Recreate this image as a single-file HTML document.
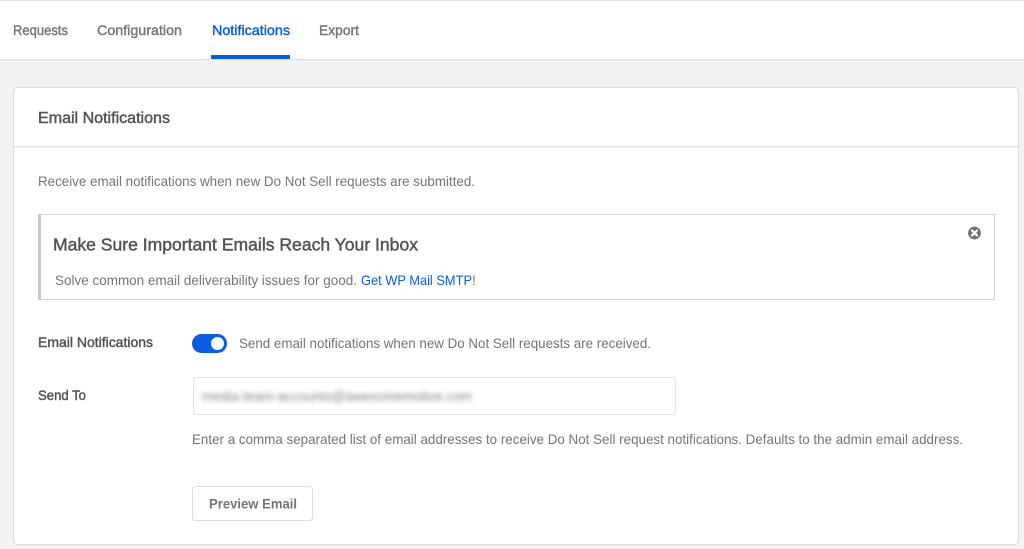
<!DOCTYPE html>
<html><head><meta charset="utf-8"><style>
html,body{margin:0;padding:0;width:1024px;height:549px;overflow:hidden;background:#f1f2f4}
svg{display:block;position:absolute;left:0;top:0}
text{font-family:"Liberation Sans",sans-serif;font-size:14px;fill:#777472;stroke:none}
.b{fill:#555351;font-weight:400}
.m{stroke:#555351;stroke-width:.45px}
.g{stroke:#777472;stroke-width:.4px}
</style></head><body>
<svg width="1024" height="549" viewBox="0 0 1024 549" xmlns="http://www.w3.org/2000/svg">
<defs><filter id="bl" x="-5%" y="-100%" width="110%" height="300%"><feGaussianBlur stdDeviation="2.3"/></filter>
<filter id="s" x="-1%" y="-30%" width="102%" height="160%"><feGaussianBlur stdDeviation="0.3"/></filter></defs>
<rect x="0" y="0" width="1024" height="549" fill="#f1f2f4"/>
<rect x="0" y="0" width="1024" height="1" fill="#e4e4e4"/>
<rect x="0" y="1" width="1024" height="58" fill="#fff"/>
<rect x="0" y="59" width="1024" height="1" fill="#dcdcde"/>
<rect x="211" y="55" width="79" height="4" fill="#0a5ce0"/>
<rect x="13.5" y="87.5" width="1005" height="457" rx="4" fill="#fff" stroke="#dcdcde"/>
<rect x="14" y="146" width="1004" height="1.4" fill="#e2e2e4"/>
<rect x="38.5" y="214.5" width="956" height="85" fill="#fff" stroke="#d4d4d4"/>
<rect x="38" y="214" width="3" height="86" fill="#c6c7c9"/>
<circle cx="974.5" cy="233" r="6.4" fill="#6c7278"/>
<path d="M972 230.5l5 5M977 230.5l-5 5" stroke="#fff" stroke-width="2.2" stroke-linecap="round"/>
<rect x="192" y="334" width="35" height="19" rx="9.5" fill="#0a5ce0"/>
<circle cx="217.5" cy="343.5" r="6.5" fill="#fff"/>
<rect x="193.5" y="377.5" width="482" height="37" rx="3" fill="#fff" stroke="#e2e2e2"/>
<rect x="192.5" y="486.5" width="120" height="34" rx="3" fill="#fff" stroke="#dedede"/>
<g filter="url(#s)">
<text class="g" x="13" y="35" textLength="55" lengthAdjust="spacingAndGlyphs">Requests</text>
<text class="g" x="97" y="35" textLength="85" lengthAdjust="spacingAndGlyphs">Configuration</text>
<text x="212" y="35" textLength="78" lengthAdjust="spacingAndGlyphs" style="fill:#0a5ce0;stroke:#0a5ce0;stroke-width:.4px">Notifications</text>
<text class="g" x="319" y="35" textLength="40" lengthAdjust="spacingAndGlyphs">Export</text>
<text class="b m" x="38" y="123" style="font-size:15.5px" textLength="132" lengthAdjust="spacingAndGlyphs">Email Notifications</text>
<text x="38" y="186" textLength="437" lengthAdjust="spacingAndGlyphs">Receive email notifications when new Do Not Sell requests are submitted.</text>
<text class="b m" x="53" y="250.5" style="font-size:17.5px" textLength="365" lengthAdjust="spacingAndGlyphs">Make Sure Important Emails Reach Your Inbox</text>
<text x="55" y="285" textLength="302" lengthAdjust="spacingAndGlyphs">Solve common email deliverability issues for good.</text>
<text x="361" y="285" textLength="111" lengthAdjust="spacingAndGlyphs" style="fill:#0a5ce0">Get WP Mail SMTP</text>
<text x="472" y="285">!</text>
<text class="b m" x="38" y="347" textLength="115" lengthAdjust="spacingAndGlyphs">Email Notifications</text>
<text x="239" y="348" textLength="412" lengthAdjust="spacingAndGlyphs">Send email notifications when new Do Not Sell requests are received.</text>
<text class="b m" x="38" y="400" textLength="48" lengthAdjust="spacingAndGlyphs">Send To</text>
<text x="192" y="444" textLength="771" lengthAdjust="spacingAndGlyphs">Enter a comma separated list of email addresses to receive Do Not Sell request notifications. Defaults to the admin email address.</text>
<text x="209" y="508.5" textLength="88" lengthAdjust="spacingAndGlyphs" style="font-weight:700;fill:#777472">Preview Email</text>
</g>
<text x="202" y="401" textLength="270" lengthAdjust="spacingAndGlyphs" filter="url(#bl)" style="fill:#888">media-team-accounts@awesomemotive.com</text>
</svg>
</body></html>
